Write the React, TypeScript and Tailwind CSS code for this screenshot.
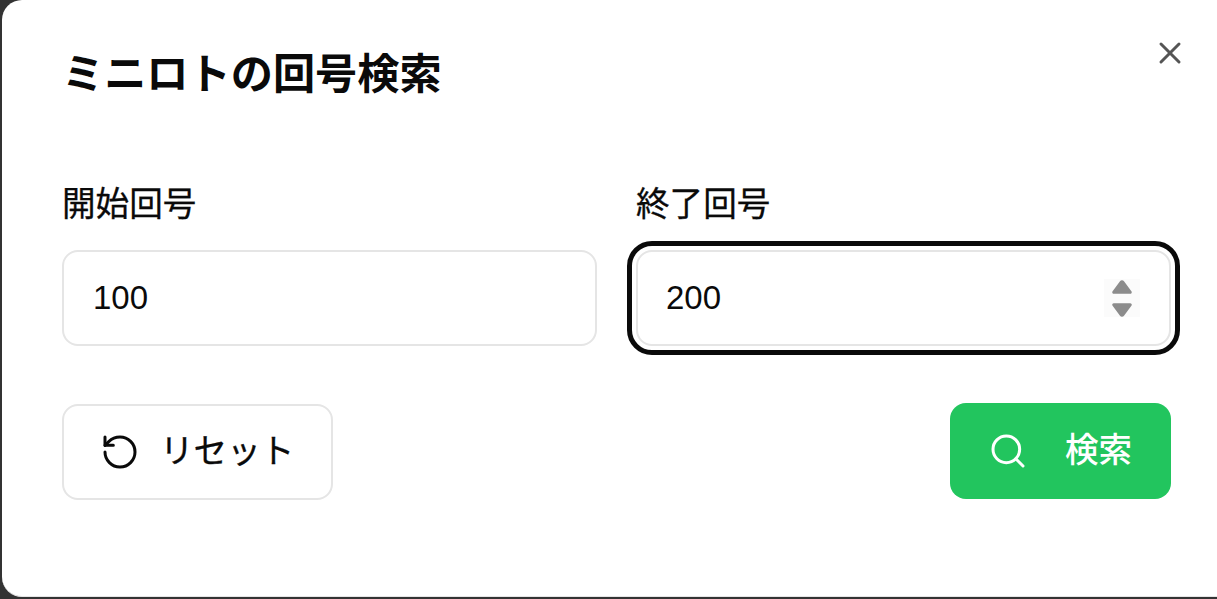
import { RotateCcw, Search, X } from 'lucide-react';

export default function App() {
  return (
    <div className="h-[599px] w-[1217px] overflow-hidden bg-[#333333] pl-[2px] [font-family:'Liberation_Sans','Noto_Sans_CJK_JP',sans-serif]">
      <div className="relative h-[597px] rounded-l-[20px] border-b border-[#e5e5e5] bg-white pl-[60px] pr-[46px] pt-[45px] text-[#0a0a0a]">
        {/* close */}
        <button className="absolute right-[29px] top-[35px] text-[#555555]">
          <X size={36} strokeWidth={2} />
        </button>

        <h2 className="h-[60px] text-[42.2px] font-bold leading-[60px]">ミニロトの回号検索</h2>

        <div className="mt-[76px] grid grid-cols-2 gap-x-[39px]">
          <div>
            <label className="block h-[48px] text-[33.6px] leading-[48px] [-webkit-text-stroke:0.3px_#0a0a0a]">開始回号</label>
            <input
              readOnly
              value="100"
              className="mt-[21px] block h-[96px] w-full rounded-[16px] border-2 border-[#e5e5e5] bg-white pl-[29px] pr-[30px] text-[33px] outline-none"
            />
          </div>
          <div>
            <label className="block h-[48px] text-[33.6px] leading-[48px] [-webkit-text-stroke:0.3px_#0a0a0a]">終了回号</label>
            <div className="relative mt-[21px]">
              <input
                readOnly
                value="200"
                className="block h-[96px] w-full rounded-[16px] border-2 border-[#e5e5e5] bg-white pl-[28px] pr-[30px] text-[33px] outline-[5px] outline-offset-[4px] outline-[#0a0a0a] outline-solid"
              />
              {/* spinner */}
              <div className="absolute right-[31px] top-[29px] flex h-[38px] w-[36px] flex-col items-center justify-center gap-[9px] bg-[#fbfbfb]">
                <svg width="20" height="14" viewBox="0 0 20 14" fill="#8c8c8c">
                  <path d="M8 1.2a2.4 2.4 0 0 1 4 0l7.4 10a1.6 1.6 0 0 1-1.3 2.6H1.9a1.6 1.6 0 0 1-1.3-2.6z" />
                </svg>
                <svg width="20" height="14" viewBox="0 0 20 14" fill="#8c8c8c">
                  <path d="M8 12.8a2.4 2.4 0 0 0 4 0l7.4-10A1.6 1.6 0 0 0 18.1.2H1.9A1.6 1.6 0 0 0 .6 2.8z" />
                </svg>
              </div>
            </div>
          </div>
        </div>

        <div className="mt-[58px] flex items-start justify-between">
          <button className="flex h-[96px] w-[271px] items-center gap-[20px] rounded-[16px] border-2 border-[#e5e5e5] bg-white pl-[36px] text-[33.6px] [-webkit-text-stroke:0.3px_#0a0a0a]">
            <RotateCcw size={40} strokeWidth={1.8} />
            <span>リセット</span>
          </button>
          <button className="-mt-px flex h-[96px] w-[221px] items-center gap-[37px] rounded-[16px] bg-[#22c55e] pl-[38px] text-[33.6px] font-medium text-white">
            <Search size={40} strokeWidth={1.8} />
            <span>検索</span>
          </button>
        </div>
      </div>
    </div>
  );
}
